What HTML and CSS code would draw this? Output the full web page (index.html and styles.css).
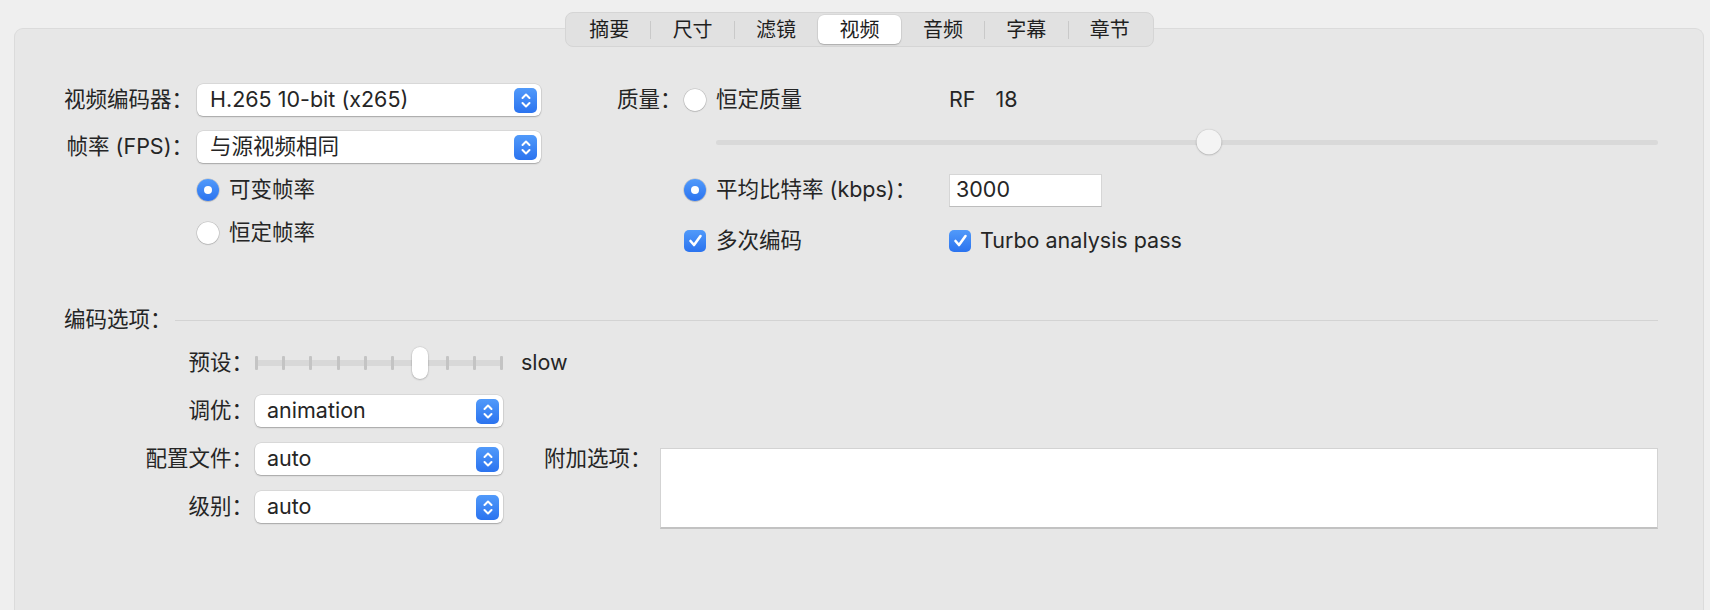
FILE: index.html
```html
<!DOCTYPE html>
<html lang="zh-CN">
<head>
<meta charset="utf-8">
<title>视频</title>
<link rel="stylesheet" href="styles.css">
</head>
<body>
<section class="panel">
  <nav class="tabs">
    <div class="tab">摘要</div><span class="sep"></span>
    <div class="tab">尺寸</div><span class="sep"></span>
    <div class="tab">滤镜</div><span class="sep off"></span>
    <div class="tab active">视频</div><span class="sep off"></span>
    <div class="tab">音频</div><span class="sep"></span>
    <div class="tab">字幕</div><span class="sep"></span>
    <div class="tab">章节</div>
  </nav>

  <div class="content">
    <div class="top">
      <div class="video-col">
        <div class="frow">
          <span class="lbl">视频编码器：</span>
          <div class="popup wide"><span class="val">H.265 10-bit (x265)</span><span class="stepper"><svg width="12" height="17" viewBox="0 0 12 17"><path d="M2.5 6 L6 2.5 L9.5 6 M2.5 11 L6 14.5 L9.5 11" fill="none" stroke="#fff" stroke-width="2" stroke-linecap="round" stroke-linejoin="round"/></svg></span></div>
        </div>
        <div class="frow r2">
          <span class="lbl">帧率 (FPS)：</span>
          <div class="popup wide"><span class="val">与源视频相同</span><span class="stepper"><svg width="12" height="17" viewBox="0 0 12 17"><path d="M2.5 6 L6 2.5 L9.5 6 M2.5 11 L6 14.5 L9.5 11" fill="none" stroke="#fff" stroke-width="2" stroke-linecap="round" stroke-linejoin="round"/></svg></span></div>
        </div>
        <div class="frow">
          <span class="lbl"></span>
          <div class="choice"><span class="radio on"></span><span>可变帧率</span></div>
        </div>
        <div class="frow">
          <span class="lbl"></span>
          <div class="choice"><span class="radio"></span><span>恒定帧率</span></div>
        </div>
      </div>

      <div class="quality-col">
        <div class="qrow">
          <span class="qlbl">质量：</span>
          <div class="choice qchoice"><span class="radio"></span><span>恒定质量</span></div>
          <div class="rf"><span>RF</span><span>18</span></div>
        </div>
        <div class="qrow slider-row">
          <div class="qslider"><span class="qknob" style="left: 52.3%"></span></div>
        </div>
        <div class="qrow r3">
          <span class="qlbl"></span>
          <div class="choice qchoice"><span class="radio on"></span><span>平均比特率 (kbps)：</span></div>
          <div class="field">3000</div>
        </div>
        <div class="qrow r4">
          <span class="qlbl"></span>
          <div class="choice qchoice"><span class="check"><svg width="21" height="21" viewBox="0 0 21 21"><path d="M5.5 11 L9 15 L15.5 6" fill="none" stroke="#fff" stroke-width="2.6" stroke-linecap="round" stroke-linejoin="round"/></svg></span><span>多次编码</span></div>
          <div class="choice tchoice"><span class="check"><svg width="21" height="21" viewBox="0 0 21 21"><path d="M5.5 11 L9 15 L15.5 6" fill="none" stroke="#fff" stroke-width="2.6" stroke-linecap="round" stroke-linejoin="round"/></svg></span><span>Turbo analysis pass</span></div>
        </div>
      </div>
    </div>

    <div class="sec-head"><span>编码选项：</span><span class="rule"></span></div>

    <div class="opts">
      <span class="olbl">预设：</span>
      <div class="pslider">
        <div class="ptrack">
          <span class="tick"></span><span class="tick"></span><span class="tick"></span><span class="tick"></span><span class="tick"></span>
          <span class="tick"></span><span class="tick"></span><span class="tick"></span><span class="tick"></span><span class="tick"></span>
          <span class="pknob"></span>
        </div>
      </div>
      <span class="slow">slow</span>
      <span class="blank"></span>

      <span class="olbl">调优：</span>
      <div class="popup"><span class="val">animation</span><span class="stepper"><svg width="12" height="17" viewBox="0 0 12 17"><path d="M2.5 6 L6 2.5 L9.5 6 M2.5 11 L6 14.5 L9.5 11" fill="none" stroke="#fff" stroke-width="2" stroke-linecap="round" stroke-linejoin="round"/></svg></span></div>
      <span class="blank"></span>
      <span class="blank"></span>

      <span class="olbl">配置文件：</span>
      <div class="popup"><span class="val">auto</span><span class="stepper"><svg width="12" height="17" viewBox="0 0 12 17"><path d="M2.5 6 L6 2.5 L9.5 6 M2.5 11 L6 14.5 L9.5 11" fill="none" stroke="#fff" stroke-width="2" stroke-linecap="round" stroke-linejoin="round"/></svg></span></div>
      <span class="xlbl">附加选项：</span>
      <div class="extra"></div>

      <span class="olbl">级别：</span>
      <div class="popup"><span class="val">auto</span><span class="stepper"><svg width="12" height="17" viewBox="0 0 12 17"><path d="M2.5 6 L6 2.5 L9.5 6 M2.5 11 L6 14.5 L9.5 11" fill="none" stroke="#fff" stroke-width="2" stroke-linecap="round" stroke-linejoin="round"/></svg></span></div>
    </div>
  </div>
</section>
</body>
</html>
```

FILE: styles.css
```css
html, body {
  margin: 0;
  padding: 0;
}
body {
  background: #efefef;
  font-family: "Inter", "Noto Sans CJK SC", sans-serif;
  font-size: 21.5px;
  line-height: 1.2;
  color: #252525;
  overflow: hidden;
  height: 610px;
}

.panel {
  margin: 28px 0 0 14px;
  width: 1690px;
  height: 640px;
  box-sizing: border-box;
  background: #e7e7e7;
  border: 1px solid #dbdbdb;
  border-bottom: none;
  border-radius: 9px 9px 0 0;
  display: flex;
  flex-direction: column;
}

/* tabs */
.tabs {
  align-self: center;
  margin-top: -17px;
  margin-left: 1px;
  width: 589px;
  height: 35px;
  box-sizing: border-box;
  padding: 2px;
  display: flex;
  align-items: center;
  background: #e1e1e1;
  border: 1px solid #d5d5d5;
  border-radius: 8px;
  font-size: 20px;
}
.tab {
  flex: 1;
  height: 100%;
  display: flex;
  align-items: center;
  justify-content: center;
  border-radius: 6px;
  color: #1f1f1f;
}
.tab.active {
  background: #fff;
  box-shadow: 0 1px 1.5px rgba(0,0,0,.22), 0 0 0 .5px rgba(0,0,0,.08);
}
.sep {
  flex: none;
  width: 1px;
  height: 18px;
  background: #c9c9c9;
}
.sep.off { background: transparent; }

/* content */
.content {
  padding: 37px 45px 0 49px;
}
.top {
  display: flex;
  gap: 76px;
}
.video-col {
  width: 477px;
  flex: none;
  display: flex;
  flex-direction: column;
}
.frow {
  display: flex;
  align-items: center;
  height: 32px;
  gap: 4px;
}
.frow + .frow { margin-top: 11px; }
.frow.r2 { margin-top: 15px; }
.lbl {
  width: 129px;
  flex: none;
  text-align: right;
  white-space: nowrap;
}

.popup {
  display: flex;
  align-items: center;
  height: 32px;
  box-sizing: border-box;
  padding: 0 4px 0 13px;
  background: #fff;
  border-radius: 6px;
  box-shadow: 0 0 0 .5px rgba(0,0,0,.12), 0 1px 1.5px rgba(0,0,0,.24);
}
.popup.wide { width: 344px; }
.val { flex: 1; white-space: nowrap; }
.stepper {
  flex: none;
  width: 23px;
  height: 25px;
  border-radius: 5px;
  background: linear-gradient(#519afa, #2b73ef);
  display: flex;
  align-items: center;
  justify-content: center;
}

.choice {
  display: flex;
  align-items: center;
  gap: 10px;
  white-space: nowrap;
}
.radio {
  flex: none;
  width: 22px;
  height: 22px;
  border-radius: 50%;
  background: #fff;
  box-shadow: 0 0 0 .5px rgba(0,0,0,.16), 0 .5px 1.5px rgba(0,0,0,.2);
}
.radio.on {
  background: linear-gradient(#519afa, #2b73ef);
  display: flex;
  align-items: center;
  justify-content: center;
}
.radio.on::after {
  content: "";
  width: 8px;
  height: 8px;
  border-radius: 50%;
  background: #fff;
}
.check {
  flex: none;
  width: 22px;
  height: 22px;
  border-radius: 5px;
  background: linear-gradient(#519afa, #2b73ef);
  display: flex;
  align-items: center;
  justify-content: center;
}

/* quality */
.quality-col {
  flex: 1;
  display: flex;
  flex-direction: column;
}
.qrow {
  display: flex;
  align-items: center;
  height: 32px;
}
.qlbl { width: 67px; flex: none; white-space: nowrap; }
.qchoice { width: 265px; flex: none; }
.rf { display: flex; gap: 20px; }
.slider-row { margin-top: 10px; height: 32px; }
.qslider {
  position: relative;
  margin-left: 99px;
  flex: 1;
  height: 5px;
  border-radius: 3px;
  background: #d9d9d9;
}
.qknob {
  position: absolute;
  top: 50%;
  width: 25px;
  height: 25px;
  border-radius: 50%;
  background: #f4f4f4;
  transform: translate(-50%, -50%);
  box-shadow: 0 .5px 2px rgba(0,0,0,.28), 0 0 0 .5px rgba(0,0,0,.05);
}
.qrow.r3 { margin-top: 16px; }
.qrow.r4 { margin-top: 19px; }
.field {
  width: 153px;
  height: 33px;
  box-sizing: border-box;
  padding: 0 6px;
  display: flex;
  align-items: center;
  background: #fff;
  border: 1px solid #d6d6d6;
  border-bottom-color: #bdbdbd;
}
.tchoice { gap: 9px; }

/* options */
.sec-head {
  display: flex;
  align-items: center;
  gap: 3px;
  height: 26px;
  margin-top: 50px;
}
.rule {
  flex: 1;
  height: 1px;
  background: #d3d3d3;
}
.opts {
  display: grid;
  grid-template-columns: 191px 248px 157px 1fr;
  grid-template-rows: repeat(4, 32px);
  row-gap: 16px;
  margin-top: 14px;
}
.olbl {
  padding-right: 2px;
  text-align: right;
  align-self: center;
  white-space: nowrap;
}
.xlbl {
  padding-left: 41px;
  align-self: center;
  white-space: nowrap;
}
.slow {
  padding-left: 18px;
  align-self: center;
}
.opts .popup { padding-left: 12px; }
.pslider {
  display: flex;
  align-items: center;
}
.ptrack {
  position: relative;
  flex: 1;
  height: 6px;
  border-radius: 2px;
  background: #d8d8d8;
  display: flex;
  justify-content: space-between;
  align-items: center;
}
.tick {
  width: 3px;
  height: 14px;
  border-radius: 1px;
  background: #c4c4c4;
}
.pknob {
  position: absolute;
  top: 50%;
  left: calc((100% - 3px) * 6 / 9 + 1.5px);
  width: 16px;
  height: 32px;
  border-radius: 8px;
  background: #fff;
  transform: translate(-50%, -50%);
  box-shadow: 0 .5px 2px rgba(0,0,0,.3), 0 0 0 .5px rgba(0,0,0,.05);
}
.extra {
  grid-column: 4;
  grid-row: 3 / span 2;
  align-self: start;
  margin-top: 5px;
  height: 81px;
  box-sizing: border-box;
  background: #fff;
  border: 1px solid #d3d3d3;
  border-bottom: 2px solid #c2c2c2;
}
```
